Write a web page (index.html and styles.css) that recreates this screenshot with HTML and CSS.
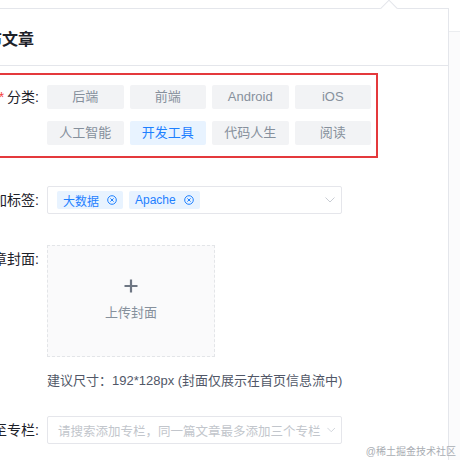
FILE: index.html
```html
<!DOCTYPE html>
<html lang="zh-CN">
<head>
    <meta charset="UTF-8">
    <meta name="viewport" content="width=device-width, initial-scale=1.0">
    <title>发布文章</title>
    <link rel="stylesheet" href="styles.css">
</head>
<body>

    <div class="topbar"></div>

    <div class="popover">
        <div class="pop-title">发布文章</div>
        <div class="pop-body">

            <div class="mark-box">
                <div class="form-item">
                    <div class="label small"><span class="req">*</span>分类:</div>
                    <div class="category-list">
                        <div class="cat">后端</div>
                        <div class="cat">前端</div>
                        <div class="cat">Android</div>
                        <div class="cat">iOS</div>
                        <div class="cat">人工智能</div>
                        <div class="cat active">开发工具</div>
                        <div class="cat">代码人生</div>
                        <div class="cat">阅读</div>
                    </div>
                </div>
            </div>

            <div class="form-item tags-item">
                <div class="label">添加标签:</div>
                <div class="select">
                    <span class="tag">大数据
                        <svg class="tag-close" viewBox="0 0 10 10" width="10" height="10"><circle cx="5" cy="5" r="4.3" fill="none" stroke="currentColor" stroke-width="1"/><path d="M3.4 3.4 L6.6 6.6 M6.6 3.4 L3.4 6.6" stroke="currentColor" stroke-width="1"/></svg>
                    </span>
                    <span class="tag">Apache
                        <svg class="tag-close" viewBox="0 0 10 10" width="10" height="10"><circle cx="5" cy="5" r="4.3" fill="none" stroke="currentColor" stroke-width="1"/><path d="M3.4 3.4 L6.6 6.6 M6.6 3.4 L3.4 6.6" stroke="currentColor" stroke-width="1"/></svg>
                    </span>
                    <svg class="arrow" viewBox="0 0 10 6" width="10" height="6"><path d="M0.5 0.5 L5 5 L9.5 0.5" fill="none" stroke="currentColor" stroke-width="1"/></svg>
                </div>
            </div>

            <div class="form-item cover-item">
                <div class="label">文章封面:</div>
                <div class="cover">
                    <svg viewBox="0 0 14 14" width="14" height="14"><path d="M7 0.5 V13.5 M0.5 7 H13.5" stroke="currentColor" stroke-width="2.2"/></svg>
                    <div class="cover-text">上传封面</div>
                </div>
            </div>
            <div class="hint">建议尺寸：192*128px (封面仅展示在首页信息流中)</div>

            <div class="form-item">
                <div class="label">收录至专栏:</div>
                <div class="select">
                    <span class="placeholder">请搜索添加专栏，同一篇文章最多添加三个专栏</span>
                    <svg class="arrow" viewBox="0 0 10 6" width="10" height="6"><path d="M0.5 0.5 L5 5 L9.5 0.5" fill="none" stroke="currentColor" stroke-width="1"/></svg>
                </div>
            </div>

        </div>
    </div>

    <div class="watermark">@稀土掘金技术社区</div>

</body>
</html>
```

FILE: styles.css
```css
* {
    margin: 0;
    padding: 0;
    box-sizing: border-box;
    font-family: "Liberation Sans", "Noto Sans CJK SC", sans-serif;
}

body {
    height: 460px;
    overflow: hidden;
    background: #fbfbfc;
    position: relative;
}

.topbar {
    height: 32px;
    background: #fff;
    border-bottom: 1px solid #ebedf0;
}

.popover {
    position: absolute;
    top: 8px;
    left: -52px;
    width: 501px;
    height: 470px;
    background: #fff;
    border: 1px solid #e4e6eb;
}

.popover::before {
    content: "";
    position: absolute;
    top: -7px;
    left: 434px;
    width: 11px;
    height: 11px;
    background: #fff;
    border-top: 1px solid #e4e6eb;
    border-left: 1px solid #e4e6eb;
    transform: rotate(45deg);
}

.pop-title {
    padding: 19px 21px 13px;
    font-size: 16px;
    line-height: 24px;
    font-weight: 600;
    color: #1d2129;
    border-bottom: 1px solid #e4e6eb;
}

.pop-body {
    padding-top: 7px;
}

.mark-box {
    width: fit-content;
    margin: 0 0 28px -10px;
    padding: 10px 5px 11px 8px;
    border: 2px solid #e4393c;
}

.form-item {
    display: flex;
    align-items: flex-start;
}

.label {
    width: 90px;
    margin-right: 8px;
    text-align: right;
    font-size: 14px;
    line-height: 28px;
    color: #1d2129;
    flex-shrink: 0;
}

.label.small {
    line-height: 24px;
}

.req {
    color: #f53f3f;
    margin-right: 3px;
}

.category-list {
    width: 324px;
    display: grid;
    grid-template-columns: repeat(4, 1fr);
    gap: 12px 6px;
}

.cat {
    height: 24px;
    line-height: 24px;
    text-align: center;
    font-size: 13px;
    color: #86909c;
    background: #f2f3f5;
    border-radius: 2px;
}

.cat.active {
    color: #1e80ff;
    background: #e8f3ff;
}

.tags-item {
    margin-bottom: 31px;
}

.select {
    width: 295px;
    height: 28px;
    border: 1px solid #e5e6eb;
    border-radius: 2px;
    display: flex;
    align-items: center;
    gap: 6px;
    padding: 0 6px 0 9px;
}

.tag {
    height: 18px;
    display: flex;
    align-items: center;
    gap: 8px;
    padding: 0 6px;
    font-size: 12px;
    color: #1e80ff;
    background: #e8f3ff;
    border-radius: 2px;
}

.tag-close {
    display: block;
}

.arrow {
    margin-left: auto;
    color: #c9cdd4;
    display: block;
}

.placeholder {
    font-size: 12.5px;
    color: #c2c6cc;
    padding-left: 1px;
    white-space: nowrap;
}

.cover-item {
    margin-bottom: 14px;
}

.cover {
    width: 168px;
    height: 112px;
    border: 1px dashed #e3e5e8;
    background: #fafafb;
    display: flex;
    flex-direction: column;
    align-items: center;
    justify-content: center;
    gap: 10px;
    color: #6e7683;
}

.cover svg {
    display: block;
}

.cover-text {
    font-size: 13px;
    line-height: 20px;
    color: #86909c;
}

.hint {
    margin-left: 98px;
    margin-bottom: 25px;
    font-size: 13px;
    line-height: 20px;
    color: #515767;
}

.watermark {
    position: absolute;
    right: 4px;
    bottom: 1px;
    font-size: 10px;
    line-height: 14px;
    color: #a9adb3;
}
```
